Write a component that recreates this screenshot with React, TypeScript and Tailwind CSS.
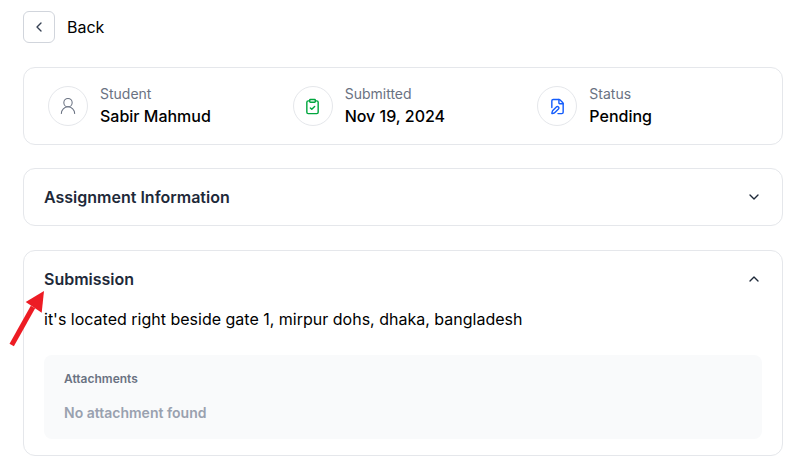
import type { ReactNode } from "react";
import { ChevronDown, ChevronLeft, ChevronUp, ClipboardCheck, FilePen, UserRound } from "lucide-react";

function Stat({ icon, label, value }: { icon: ReactNode; label: string; value: string }) {
  return (
    <div className="flex items-center gap-3">
      <div className="flex h-10 w-10 items-center justify-center rounded-full border border-gray-200">{icon}</div>
      <div>
        <p className="text-sm text-gray-500">{label}</p>
        <p className="text-base font-medium text-black">{value}</p>
      </div>
    </div>
  );
}

export default function App() {
  return (
    <div className="relative h-[472px] w-[803px] overflow-hidden bg-white pt-[11px] pl-[23px] pr-5 font-['Inter',sans-serif]">
      <div className="flex items-center gap-3">
        <button className="flex h-8 w-8 items-center justify-center rounded-md border border-gray-300">
          <ChevronLeft size={16} className="text-gray-700" />
        </button>
        <span className="text-base text-black">Back</span>
      </div>

      <div className="mt-6 grid grid-cols-3 gap-6 rounded-xl border border-gray-200 px-6 py-4">
        <Stat icon={<UserRound size={20} strokeWidth={1.25} className="text-gray-500" />} label="Student" value="Sabir Mahmud" />
        <Stat icon={<ClipboardCheck size={17} strokeWidth={2} className="text-green-600" />} label="Submitted" value="Nov 19, 2024" />
        <Stat icon={<FilePen size={17} strokeWidth={2} className="text-blue-600" />} label="Status" value="Pending" />
      </div>

      <div className="mt-[23px] flex items-center justify-between rounded-xl border border-gray-200 px-5 py-4">
        <h2 className="text-base font-semibold text-gray-800">Assignment Information</h2>
        <ChevronDown size={16} className="text-gray-800" />
      </div>

      <div className="mt-6 rounded-xl border border-gray-200 px-5 py-4">
        <div className="flex items-center justify-between">
          <h2 className="text-base font-semibold text-gray-800">Submission</h2>
          <ChevronUp size={16} className="text-gray-800" />
        </div>
        <p className="mt-4 text-base text-black">it's located right beside gate 1, mirpur dohs, dhaka, bangladesh</p>
        <div className="mt-6 rounded-lg bg-gray-50 px-5 py-4">
          <p className="text-xs font-semibold text-gray-500">Attachments</p>
          <p className="mt-4 text-sm font-semibold text-gray-400">No attachment found</p>
        </div>
      </div>

      <svg className="absolute top-[290px] left-[8px]" width="40" height="58" viewBox="0 0 40 58" fill="none">
        <path d="M3.7 55L25 17" stroke="#ed1c24" strokeWidth="5" />
        <path d="M36 1L17.7 12L33.7 22.7Z" fill="#ed1c24" />
      </svg>
    </div>
  );
}
